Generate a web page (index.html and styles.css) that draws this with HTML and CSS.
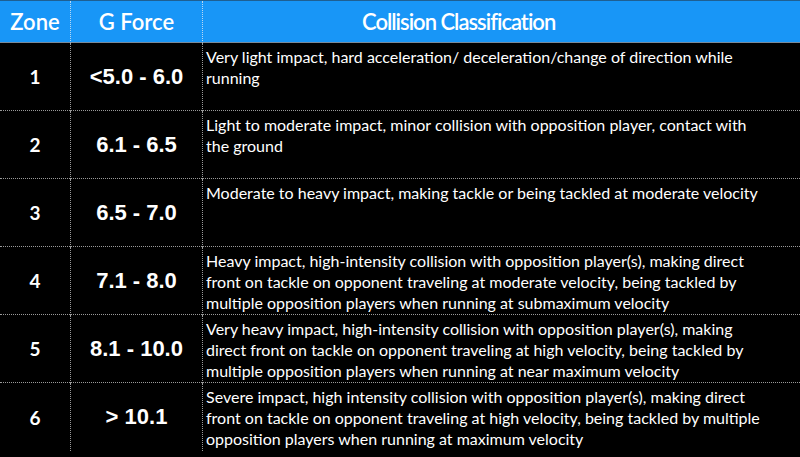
FILE: index.html
```html
<!DOCTYPE html>
<html>
<head>
<meta charset="utf-8">
<link rel="stylesheet" href="styles.css">
</head>
<body>
<div class="table">
  <div class="head zone">Zone</div>
  <div class="head force">G Force</div>
  <div class="head desc"><span class="desc-title">Collision Classification</span></div>

  <div class="cell zone">1</div>
  <div class="cell force">&lt;5.0 - 6.0</div>
  <div class="cell desc">Very light impact, hard acceleration/ deceleration/change of direction while<br>running</div>

  <div class="cell zone">2</div>
  <div class="cell force">6.1 - 6.5</div>
  <div class="cell desc">Light to moderate impact, minor collision with opposition player, contact with<br>the ground</div>

  <div class="cell zone">3</div>
  <div class="cell force">6.5 - 7.0</div>
  <div class="cell desc">Moderate to heavy impact, making tackle or being tackled at moderate velocity</div>

  <div class="cell zone">4</div>
  <div class="cell force">7.1 - 8.0</div>
  <div class="cell desc">Heavy impact, high-intensity collision with opposition player(s), making direct<br>front on tackle on opponent traveling at moderate velocity, being tackled by<br>multiple opposition players when running at submaximum velocity</div>

  <div class="cell zone">5</div>
  <div class="cell force">8.1 - 10.0</div>
  <div class="cell desc">Very heavy impact, high-intensity collision with opposition player(s), making<br>direct front on tackle on opponent traveling at high velocity, being tackled by<br>multiple opposition players when running at near maximum velocity</div>

  <div class="cell zone last">6</div>
  <div class="cell force last">&gt; 10.1</div>
  <div class="cell desc last">Severe impact, high intensity collision with opposition player(s), making direct<br>front on tackle on opponent traveling at high velocity, being tackled by multiple<br>opposition players when running at maximum velocity</div>
</div>
</body>
</html>
```

FILE: styles.css
```css
html, body {
  margin: 0;
  padding: 0;
  background: #000;
}
body {
  width: 800px;
  height: 457px;
  overflow: hidden;
  color: #fff;
  font-family: Lato, "Open Sans", sans-serif;
}
.table {
  display: grid;
  grid-template-columns: 70px 132px 598px;
  grid-template-rows: 42px repeat(6, 68px);
  border-top: 1px solid #1e5f92;
}
.head {
  background: #1896f7;
  color: #fff;
  font-size: 22px;
  font-weight: 600;
  display: flex;
  align-items: center;
  justify-content: center;
  border-bottom: 1px solid #7a8a9a;
  border-left: 1px dotted #b9d8f2;
}
.head.zone {
  border-left: none;
}
.head.desc {
  justify-content: flex-start;
  padding-left: 159px;
}
.desc-title {
  letter-spacing: -1px;
}
.cell {
  border-left: 1px dotted #9a9a9a;
  border-bottom: 1px dotted #9a9a9a;
  background: #000;
}
.cell.zone {
  border-left: none;
  display: flex;
  align-items: center;
  justify-content: center;
  font-size: 19px;
  font-weight: 700;
}
.cell.force {
  display: flex;
  align-items: center;
  justify-content: center;
  font-family: "Liberation Sans", Arial, sans-serif;
  font-weight: 700;
  font-size: 22px;
}
.cell.desc {
  font-size: 16px;
  line-height: 21px;
  padding: 3px 0 0 3px;
  white-space: nowrap;
}
.cell.last {
  border-bottom: none;
}
```
